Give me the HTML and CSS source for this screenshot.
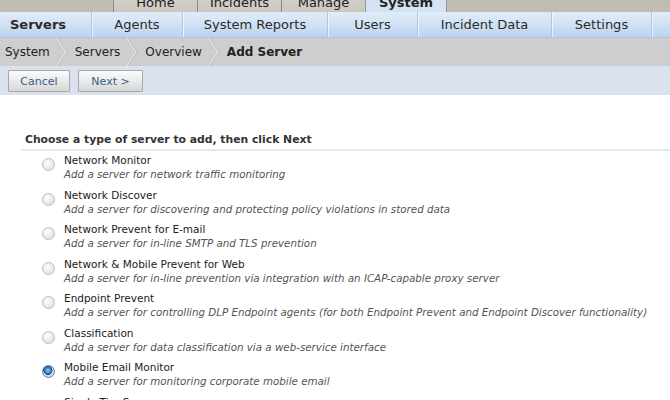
FILE: index.html
```html
<!DOCTYPE html>
<html lang="en">

<head>
    <meta charset="UTF-8" />
    <title>Add Server</title>
    <link rel="stylesheet" href="styles.css">
</head>

<body>
    <div class="top-tabs">
        <div class="tab">Home</div>
        <div class="tab">Incidents</div>
        <div class="tab">Manage</div>
        <div class="tab active">System</div>
    </div>

    <ul class="sub-nav">
        <li class="current">Servers</li>
        <li>Agents</li>
        <li>System Reports</li>
        <li>Users</li>
        <li>Incident Data</li>
        <li>Settings</li>
    </ul>

    <div class="crumbs">
        <span>System</span>
        <svg class="sep" width="12" height="28" viewBox="0 0 12 28"><path d="M2 0 L11 14 L2 28" fill="none" stroke="#b4b4b4" stroke-width="1"/><path d="M1 0 L10 14 L1 28" fill="none" stroke="#ececec" stroke-width="1"/></svg>
        <span>Servers</span>
        <svg class="sep" width="12" height="28" viewBox="0 0 12 28"><path d="M2 0 L11 14 L2 28" fill="none" stroke="#b4b4b4" stroke-width="1"/><path d="M1 0 L10 14 L1 28" fill="none" stroke="#ececec" stroke-width="1"/></svg>
        <span>Overview</span>
        <svg class="sep" width="12" height="28" viewBox="0 0 12 28"><path d="M2 0 L11 14 L2 28" fill="none" stroke="#b4b4b4" stroke-width="1"/><path d="M1 0 L10 14 L1 28" fill="none" stroke="#ececec" stroke-width="1"/></svg>
        <span class="here">Add Server</span>
    </div>

    <div class="toolbar">
        <button type="button">Cancel</button>
        <button type="button">Next &gt;</button>
    </div>

    <div class="content">
        <h2>Choose a type of server to add, then click Next</h2>
        <ul class="server-types">
            <li>
                <input type="radio" name="type" id="t1">
                <label for="t1">Network Monitor<small>Add a server for network traffic monitoring</small></label>
            </li>
            <li>
                <input type="radio" name="type" id="t2">
                <label for="t2">Network Discover<small>Add a server for discovering and protecting policy violations in stored data</small></label>
            </li>
            <li>
                <input type="radio" name="type" id="t3">
                <label for="t3">Network Prevent for E-mail<small>Add a server for in-line SMTP and TLS prevention</small></label>
            </li>
            <li>
                <input type="radio" name="type" id="t4">
                <label for="t4">Network &amp; Mobile Prevent for Web<small>Add a server for in-line prevention via integration with an ICAP-capable proxy server</small></label>
            </li>
            <li>
                <input type="radio" name="type" id="t5">
                <label for="t5">Endpoint Prevent<small>Add a server for controlling DLP Endpoint agents (for both Endpoint Prevent and Endpoint Discover functionality)</small></label>
            </li>
            <li>
                <input type="radio" name="type" id="t6">
                <label for="t6">Classification<small>Add a server for data classification via a web-service interface</small></label>
            </li>
            <li>
                <input type="radio" name="type" id="t7" checked>
                <label for="t7">Mobile Email Monitor<small>Add a server for monitoring corporate mobile email</small></label>
            </li>
            <li>
                <input type="radio" name="type" id="t8">
                <label for="t8">Single Tier Server<small>Add a server that runs all detection on one machine</small></label>
            </li>
        </ul>
    </div>
</body>

</html>
```

FILE: styles.css
```css
* {
    margin: 0;
    padding: 0;
    box-sizing: border-box;
}

body {
    font-family: 'DejaVu Sans', Verdana, sans-serif;
    color: #222;
    background: #fff;
    height: 400px;
    overflow: hidden;
}

/* top level tabs, scrolled partly off the top */
.top-tabs {
    display: flex;
    height: 12px;
    padding-left: 113px;
    background: #bfbcb4;
    overflow: hidden;
}

.top-tabs .tab {
    width: 84px;
    margin-top: -12px;
    height: 24px;
    line-height: 30px;
    text-align: center;
    font-size: 13px;
    color: #222;
    background: linear-gradient(#d8d6d0, #cbc8c1);
    border-left: 1px solid #8c8a84;
}

.top-tabs .tab.active {
    width: 82px;
    font-weight: bold;
    background: #d4e3f4;
    border-left: 1px solid #9a9893;
    border-right: 1px solid #9a9893;
}

.sub-nav {
    display: flex;
    list-style: none;
    height: 26px;
    background: linear-gradient(#e2ecf8, #cfe0f3 55%, #b9d3ee);
    border-bottom: 1px solid #adc4dd;
}

.sub-nav li {
    font-size: 13px;
    line-height: 26px;
    color: #2a2a2a;
    text-align: center;
    border-right: 1px solid #b3c5d9;
    box-shadow: 1px 0 0 #eef4fb;
}

.sub-nav li:nth-child(1) { width: 92px; text-align: left; padding-left: 10px; }
.sub-nav li:nth-child(2) { width: 91px; }
.sub-nav li:nth-child(3) { width: 145px; }
.sub-nav li:nth-child(4) { width: 90px; }
.sub-nav li:nth-child(5) { width: 134px; }
.sub-nav li:nth-child(6) { width: 100px; }

.sub-nav li.current {
    font-weight: bold;
}

.crumbs {
    display: flex;
    align-items: center;
    height: 28px;
    background: #cecece;
    padding-left: 5px;
}

.crumbs span {
    font-size: 12px;
    line-height: 28px;
    color: #222;
}

.crumbs .sep {
    display: block;
    margin: 0 7px 0 6px;
}

.crumbs span.here {
    font-weight: bold;
}

.toolbar {
    display: flex;
    gap: 8px;
    height: 29px;
    padding: 4px 8px 0;
    background: #d9e2ed;
}

.toolbar button {
    height: 22px;
    padding: 0;
    white-space: nowrap;
    font-family: 'DejaVu Sans', Verdana, sans-serif;
    font-size: 11px;
    color: #3b5b8c;
    background: linear-gradient(#fbfbfb, #e8e8e8 55%, #d6d6d6);
    border: 1px solid #a8a8a8;
    border-radius: 1px;
}

.toolbar button:first-child {
    width: 62px;
}

.toolbar button:last-child {
    width: 65px;
}

.content {
    padding: 38px 0 0 21px;
}

.content h2 {
    font-size: 10.8px;
    font-weight: bold;
    color: #333;
    padding: 0 0 3px 4px;
    border-bottom: 2px solid #e2e9f3;
}

.server-types {
    list-style: none;
    padding: 2px 0 0 20px;
}

.server-types li {
    display: flex;
    align-items: flex-start;
    height: 34.5px;
}

.server-types input {
    appearance: none;
    flex: none;
    width: 13px;
    height: 13px;
    margin: 5px 9px 0 1px;
    border: 1px solid #bdbdbd;
    border-radius: 50%;
    background: radial-gradient(circle at 40% 35%, #fefefe, #e4e4e4 70%, #d6d6d6);
}

.server-types input:checked {
    border-color: #6b7f96;
    background:
        radial-gradient(circle at 45% 40%, #8fd0ff 0, #2a7bc9 35%, #0e4a8a 50%, transparent 52%),
        radial-gradient(circle, #eef2f6, #c4ccd6);
}

.server-types label {
    font-size: 10.5px;
    line-height: 14px;
    color: #222;
}

.server-types small {
    display: block;
    font-size: 10.3px;
    font-style: italic;
    color: #555;
}
```
